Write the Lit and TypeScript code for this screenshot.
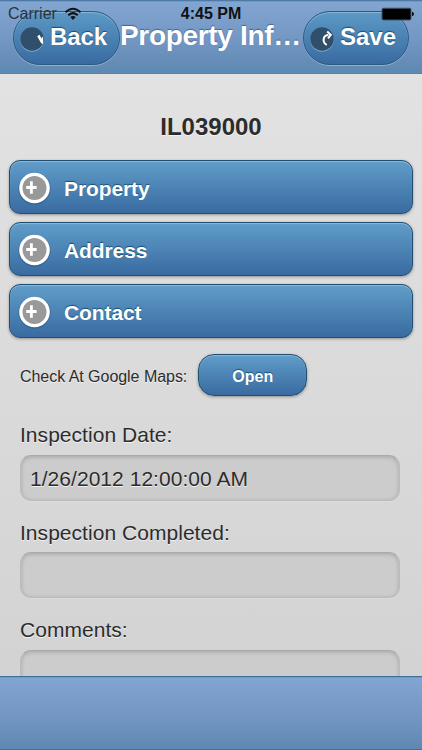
import { LitElement, html, css, svg } from "lit";
import { customElement, property } from "lit/decorators.js";

@customElement("header-button")
class HeaderButton extends LitElement {
  @property() icon = "back";
  @property() label = "";
  static styles = css`
    :host { display: block; box-sizing: border-box; height: 54px; flex: none; }
    .btn {
      box-sizing: border-box; width: 100%; height: 54px; border-radius: 27px;
      border: 1px solid #2a5a80; display: flex; align-items: center; padding-left: 5px;
      background: linear-gradient(#5c99c6, #396ba1);
      box-shadow: inset 0 1px 1px rgba(255,255,255,.3), 0 1px 0 rgba(255,255,255,.3);
    }
    svg { flex: none; width: 26px; height: 26px; display: block; margin-top: 1px; }
    span {
      font: bold 24px/28px "Liberation Sans", Arial, sans-serif; color: #fff;
      margin: -2px 0 0 5px; text-shadow: 0 -1px 1px #145072; white-space: nowrap;
    }
    .back { letter-spacing: -.1px; }
  `;
  render() {
    const glyph = this.icon === "back"
      ? svg`<path d="M18.2 10.2L20.4 8.8L22.4 12.2L24 10.4V18L22 17Z" fill="#fff"/>`
      : svg`<path d="M17.8 18.8C13.2 16.5 13.4 9.8 19.4 8.8M18.2 5.6L21.8 8.8L19 12.4" stroke="#fff" stroke-width="2" fill="none"/>`;
    return html`<div class="btn">
      <svg viewBox="0 0 26 26">
        <circle cx="13" cy="14" r="11.7" fill="#9cbcd8" opacity=".7"/>
        <circle cx="13" cy="13" r="11.7" fill="#304f6b"/>
        ${glyph}
      </svg>
      <span class=${this.icon}>${this.label}</span>
    </div>`;
  }
}

@customElement("collapsible-row")
class CollapsibleRow extends LitElement {
  @property() label = "";
  static styles = css`
    :host { display: block; }
    .row {
      box-sizing: border-box; height: 54px; border: 1px solid #204e70; border-radius: 11px;
      display: flex; align-items: center; padding-left: 7px;
      background: linear-gradient(#609dc9, #396ba1);
      box-shadow: inset 0 1px 1px rgba(255,255,255,.3), 0 1px 3px rgba(0,0,0,.35);
    }
    svg { width: 36px; height: 36px; display: block; margin-top: 2px; }
    span {
      font: bold 21px/26px "Liberation Sans", Arial, sans-serif; color: #fff; letter-spacing: -.1px;
      margin: 3px 0 0 11px; text-shadow: 0 -1px 1px #145072;
    }
  `;
  render() {
    return html`<div class="row">
      <svg viewBox="0 0 36 36">
        <circle cx="17.5" cy="18.6" r="16.2" fill="#174870" opacity=".3"/>
        <circle cx="17.5" cy="18" r="15.3" fill="#fff"/>
        <circle cx="17.5" cy="18" r="12" fill="#999"/>
        <path d="M9.2 17.5H19.6M14.4 11.2V23.8" stroke="#fff" stroke-width="2.8"/>
      </svg>
      <span>${this.label}</span>
    </div>`;
  }
}

@customElement("app-root")
class AppRoot extends LitElement {
  static styles = css`
    :host {
      display: flex; flex-direction: column; position: relative; box-sizing: border-box;
      width: 422px; height: 750px; overflow: hidden; color: #2c2c2c;
      font-family: "Liberation Sans", Arial, sans-serif;
      background: linear-gradient(#e4e4e4, #d1d1d1);
      text-shadow: 0 1px 0 #f2f2f2;
    }
    .bar {
      flex: none; box-sizing: border-box; height: 74px; border: solid #40709c; border-width: 1px 0;
      background: linear-gradient(#82a6d1, #7396c3 55%, #5d88b2);
      box-shadow: inset 0 1px 0 rgba(110,150,190,.8);
    }
    .header { display: flex; padding: 10px 13px 0; border-top-color: #4c79a6; border-bottom-color: #5581ad; }
    .back { width: 107px; }
    .save { width: 106px; }
    .title {
      flex: 1; min-width: 0; margin: 0; white-space: nowrap;
      font-weight: bold; font-size: 28px; line-height: 32px; padding-top: 9px;
      color: #fff; text-shadow: 0 -1px 1px #3e6790; letter-spacing: -.33px;
    }
    .status {
      position: absolute; left: 0; top: 0; width: 422px; height: 28px; color: #111;
      display: grid; grid-template-columns: 1fr auto 1fr; align-items: center;
      text-shadow: none; font-size: 16px; line-height: 20px;
    }
    .carrier { display: flex; align-items: center; padding-left: 8px; gap: 7px; color: #2b3440; }
    .wifi { width: 18px; height: 14px; }
    .time { font-weight: bold; font-size: 16px; }
    .battery { justify-self: end; width: 34px; height: 14px; margin-right: 7px; }
    .page { flex: 1; min-height: 0; overflow: hidden; display: flex; flex-direction: column; }
    .code { margin: 39px 0 0; font-size: 24px; line-height: 28px; text-align: center; }
    .rows { display: flex; flex-direction: column; gap: 8px; padding: 19px 9px 0; }
    .maps { flex: none; display: flex; align-items: flex-start; height: 43px; margin: 16px 0 0 20px; gap: 11px; font-size: 16px; }
    .check { line-height: 18px; padding-top: 14px; letter-spacing: -.04px; }
    .open {
      box-sizing: border-box; width: 109px; height: 42px; border-radius: 16px; border: 1px solid #204e70;
      background: linear-gradient(#609dc9, #396ba1); color: #fff; font: bold 16px/41px "Liberation Sans", Arial, sans-serif;
      text-align: center; padding: 1px 0 0; text-shadow: 0 -1px 1px #145072;
      box-shadow: inset 0 1px 1px rgba(255,255,255,.3), 0 1px 3px rgba(0,0,0,.35);
    }
    .field { flex: none; margin: 0 22px 0 20px; font-size: 21px; line-height: 26px; letter-spacing: .04px; }
    .field + .field { margin-top: 19px; }
    .field.first { margin-top: 25px; }
    .field label { display: block; }
    .input {
      box-sizing: border-box; height: 46px; margin-top: 6.7px; border-radius: 11px; padding: 2px 9px 0;
      background: #ccc; border: 1px solid #bcbcbc; border-top-color: #aaa;
      display: flex; align-items: center;
      box-shadow: inset 0 1px 4px rgba(0,0,0,.2), 0 1px 0 rgba(255,255,255,.15);
    }
  `;
  render() {
    return html`
      <header class="bar header">
        <header-button class="back" icon="back" label="Back"></header-button>
        <h1 class="title">Property Inf…</h1>
        <header-button class="save" icon="save" label="Save"></header-button>
      </header>
      <main class="page">
        <h2 class="code">IL039000</h2>
        <div class="rows">
          ${["Property", "Address", "Contact"].map((l) => html`<collapsible-row label=${l}></collapsible-row>`)}
        </div>
        <div class="maps"><span class="check">Check At Google Maps:</span><div class="open">Open</div></div>
        <div class="field first"><label>Inspection Date:</label><div class="input">1/26/2012 12:00:00 AM</div></div>
        <div class="field"><label>Inspection Completed:</label><div class="input"></div></div>
        <div class="field"><label>Comments:</label><div class="input"></div></div>
      </main>
      <footer class="bar"></footer>
      <div class="status">
        <div class="carrier"><span>Carrier</span>
          <svg class="wifi" viewBox="0 0 18 14">
            <path d="M1.5 5.2Q9 -1.8 16.5 5.2M4.3 8.2Q9 4 13.7 8.2" fill="none" stroke="#111" stroke-width="2"/>
            <path d="M6.3 10Q9 7.9 11.7 10L9 13Z" fill="#111"/>
          </svg>
        </div>
        <div class="time">4:45 PM</div>
        <svg class="battery" viewBox="0 0 34 14">
          <rect x="1" y="1.2" width="29" height="11.8" rx="1.5" fill="#000" stroke="#44566b"/>
          <path d="M31.5 5Q33.5 7 31.5 9Z" fill="#111" stroke="#111"/>
        </svg>
      </div>`;
  }
}
